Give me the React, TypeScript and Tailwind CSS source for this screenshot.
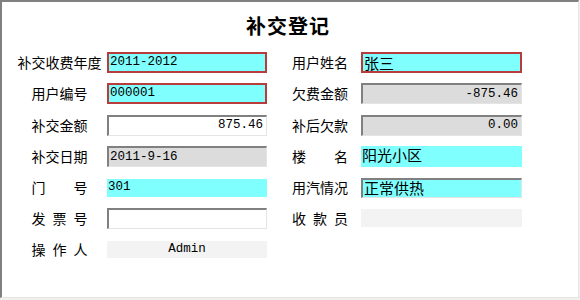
import React from 'react';

const cjk = { fontFamily: '"Noto Sans CJK SC", "Noto Sans", sans-serif' };
const mono = { fontFamily: '"Liberation Mono", "Noto Sans CJK SC", monospace' };

// Styles des champs (style Windows classique)
const red = 'border-2 border-[#b83c3c] bg-[#80ffff]';
const sunken =
  'border-t-2 border-l-2 border-t-[#808080] border-l-[#808080] border-r border-b border-r-[#e4e4e4] border-b-[#e4e4e4]';

interface FieldProps {
  value?: string;
  kind: 'red' | 'white' | 'gray' | 'cyan' | 'cyanSunken' | 'flat';
  align?: 'left' | 'right' | 'center' | 'top';
  font?: 'mono' | 'cjk';
  height?: string;
  width?: string;
}

const Field: React.FC<FieldProps> = ({ value = '', kind, align = 'left', font = 'mono', height = 'h-[21px]', width = 'w-[160px]' }) => {
  const base = {
    red: red,
    white: `${sunken} bg-white`,
    gray: `${sunken} bg-[#dcdcdc]`,
    cyan: 'bg-[#80ffff]',
    cyanSunken: `${sunken} bg-[#80ffff]`,
    flat: 'bg-[#f3f3f3]',
  }[kind];
  const justify =
    align === 'right' ? 'justify-end pr-[3px]' : align === 'center' ? 'justify-center' : 'justify-start pl-[1px]';
  const items = align === 'top' ? 'items-start' : 'items-center';
  return (
    <div
      className={`${width} ${height} ${base} flex ${items} ${justify} text-black ${font === 'mono' ? 'text-[12.5px]' : 'text-[15px] leading-[18px]'}`}
      style={font === 'mono' ? mono : cjk}
    >
      {value}
    </div>
  );
};

const Label: React.FC<{ text: string; spread?: boolean; className?: string }> = ({ text, spread, className = '' }) => {
  if (spread) {
    return (
      <div className={`flex justify-between w-[56px] text-[14px] ${className}`} style={cjk}>
        {text.split('').map((c, i) => (
          <span key={i}>{c}</span>
        ))}
      </div>
    );
  }
  return (
    <div className={`text-[14px] whitespace-nowrap ${className}`} style={cjk}>
      {text}
    </div>
  );
};

const rows = [
  {
    h: 'h-[31px]',
    left: { label: '补交收费年度', field: <Field kind="red" value="2011-2012" /> },
    right: { label: '用户姓名', field: <Field kind="red" value="张三" font="cjk" width="w-[161px]" /> },
  },
  {
    h: 'h-[31px]',
    left: { label: '用户编号', field: <Field kind="red" value="000001" /> },
    right: { label: '欠费金额', field: <Field kind="gray" value="-875.46" align="right" width="w-[161px]" /> },
  },
  {
    h: 'h-[32px]',
    left: { label: '补交金额', field: <Field kind="white" value="875.46" align="right" /> },
    right: { label: '补后欠款', field: <Field kind="gray" value="0.00" align="right" width="w-[161px]" /> },
  },
  {
    h: 'h-[31px]',
    left: { label: '补交日期', field: <Field kind="gray" value="2011-9-16" /> },
    right: {
      label: '楼名',
      spread: true,
      field: <Field kind="cyan" value="阳光小区" font="cjk" align="top" width="w-[161px]" />,
    },
  },
  {
    h: 'h-[31px]',
    left: { label: '门号', spread: true, field: <Field kind="cyan" value="301" height="h-[18px]" /> },
    right: { label: '用汽情况', field: <Field kind="cyanSunken" value="正常供热" font="cjk" height="h-[20px]" width="w-[161px]" /> },
  },
  {
    h: 'h-[30px]',
    left: { label: '发票号', spread: true, field: <Field kind="white" /> },
    right: { label: '收款员', spread: true, field: <Field kind="flat" height="h-[18px]" width="w-[161px]" /> },
  },
  {
    h: 'h-[32px]',
    left: { label: '操作人', spread: true, field: <Field kind="flat" value="Admin" align="center" height="h-[17px]" /> },
  },
];

export default function App() {
  return (
    <div className="w-[580px] h-[300px] bg-[#f0f0f0]">
      <div className="w-[579px] h-[298px] bg-white border-t-2 border-l-2 border-[#808080] border-r border-r-[#e6e6de] border-b border-b-[#e6e6de] text-black">
        {/* Titre */}
        <div className="h-[45px] flex items-center justify-center pt-[2px] pr-[4px]">
          <h1 className="text-[20px] font-bold tracking-[1px]" style={cjk}>
            补交登记
          </h1>
        </div>

        {/* Lignes du formulaire */}
        <div className="flex flex-col">
          {rows.map((row, i) => (
            <div key={i} className={`${row.h} flex items-center pl-[10px]`}>
              <div className="w-[95px] flex justify-center">
                <Label text={row.left.label} spread={row.left.spread} />
              </div>
              {row.left.field}
              {row.right && (
                <div className="flex items-center ml-[25px]">
                  <div className="w-[56px]">
                    <Label text={row.right.label} spread={row.right.spread} />
                  </div>
                  <div className="ml-[13px]">{row.right.field}</div>
                </div>
              )}
            </div>
          ))}
        </div>
      </div>
    </div>
  );
}
